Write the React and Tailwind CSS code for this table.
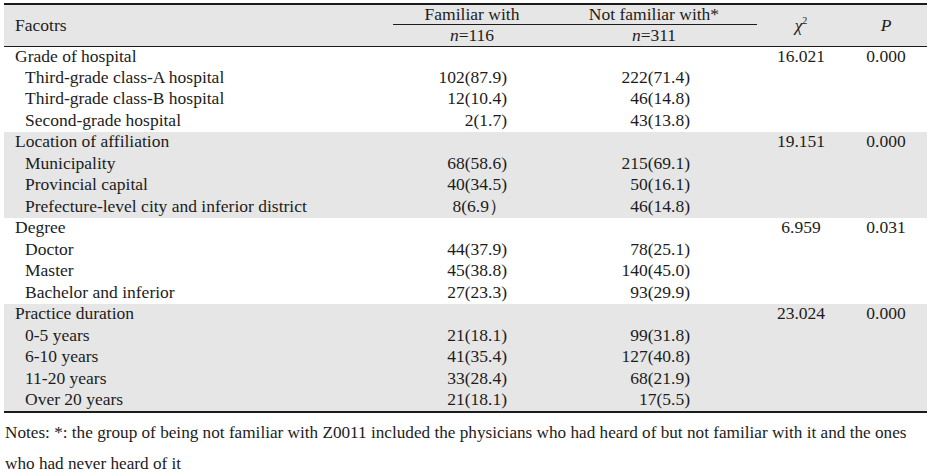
import React from 'react';

const groups = [
  {
    name: 'Grade of hospital', chi: '16.021', p: '0.000', shade: false,
    rows: [
      ['Third-grade class-A hospital', '102(87.9)', '222(71.4)'],
      ['Third-grade class-B hospital', '12(10.4)', '46(14.8)'],
      ['Second-grade hospital', '2(1.7)', '43(13.8)'],
    ],
  },
  {
    name: 'Location of affiliation', chi: '19.151', p: '0.000', shade: true,
    rows: [
      ['Municipality', '68(58.6)', '215(69.1)'],
      ['Provincial capital', '40(34.5)', '50(16.1)'],
      ['Prefecture-level city and inferior district', '8(6.9\uFF09', '46(14.8)'],
    ],
  },
  {
    name: 'Degree', chi: '6.959', p: '0.031', shade: false,
    rows: [
      ['Doctor', '44(37.9)', '78(25.1)'],
      ['Master', '45(38.8)', '140(45.0)'],
      ['Bachelor and inferior', '27(23.3)', '93(29.9)'],
    ],
  },
  {
    name: 'Practice duration', chi: '23.024', p: '0.000', shade: true,
    rows: [
      ['0-5 years', '21(18.1)', '99(31.8)'],
      ['6-10 years', '41(35.4)', '127(40.8)'],
      ['11-20 years', '33(28.4)', '68(21.9)'],
      ['Over 20 years', '21(18.1)', '17(5.5)'],
    ],
  },
];

export default function App() {
  return (
    <div className="w-[941px] h-[473px] bg-white text-[#1c1c1c] pl-[4px] pt-[3px] overflow-hidden font-['Liberation_Serif','Times_New_Roman',serif]">
      <table className="w-[923px] table-fixed border-collapse text-[17.5px] leading-[18px]">
        <colgroup>
          <col className="w-[389px]" />
          <col className="w-[158px]" />
          <col className="w-[206px]" />
          <col className="w-[88px]" />
          <col className="w-[82px]" />
        </colgroup>
        <thead>
          <tr className="bg-[#e6e6e6] border-t-2 border-[#1c1c1c]">
            <th rowSpan={2} className="text-left font-normal pl-[11px] align-middle border-b border-[#1c1c1c]">Facotrs</th>
            <th className="font-normal h-[20px] border-b border-[#1c1c1c]">Familiar with</th>
            <th className="font-normal h-[20px] border-b border-[#1c1c1c]">Not familiar with*</th>
            <th rowSpan={2} className="font-normal align-middle border-b border-[#1c1c1c]">
              <i>χ</i><sup className="text-[10px] -top-[7px]">2</sup>
            </th>
            <th rowSpan={2} className="font-normal italic align-middle border-b border-[#1c1c1c]">P</th>
          </tr>
          <tr className="bg-[#e6e6e6]">
            <th className="font-normal h-[22px] border-b border-[#1c1c1c]"><i>n</i>=116</th>
            <th className="font-normal h-[22px] border-b border-[#1c1c1c]"><i>n</i>=311</th>
          </tr>
        </thead>
        <tbody className="border-b-2 border-[#1c1c1c]">
          {groups.map((g) => (
            <React.Fragment key={g.name}>
              <tr className={g.shade ? 'bg-[#e6e6e6]' : ''}>
                <td className="h-[21.5px] pl-[11px] pb-[3px]">{g.name}</td>
                <td></td>
                <td></td>
                <td className="text-center pb-[3px]">{g.chi}</td>
                <td className="text-center pb-[3px]">{g.p}</td>
              </tr>
              {g.rows.map((r) => (
                <tr key={r[0]} className={g.shade ? 'bg-[#e6e6e6]' : ''}>
                  <td className="h-[21.5px] pl-[21px] pb-[3px]">{r[0]}</td>
                  <td className="text-right pr-[44px] pb-[3px]">{r[1]}</td>
                  <td className="text-right pr-[67px] pb-[3px]">{r[2]}</td>
                  <td></td>
                  <td></td>
                </tr>
              ))}
            </React.Fragment>
          ))}
        </tbody>
      </table>
      <p className="text-[17.2px] leading-[31px] pl-[1px] pt-[4px] w-[925px]">
        Notes: *: the group of being not familiar with Z0011 included the physicians who had heard of but not familiar with it and the ones who had never heard of it
      </p>
    </div>
  );
}
